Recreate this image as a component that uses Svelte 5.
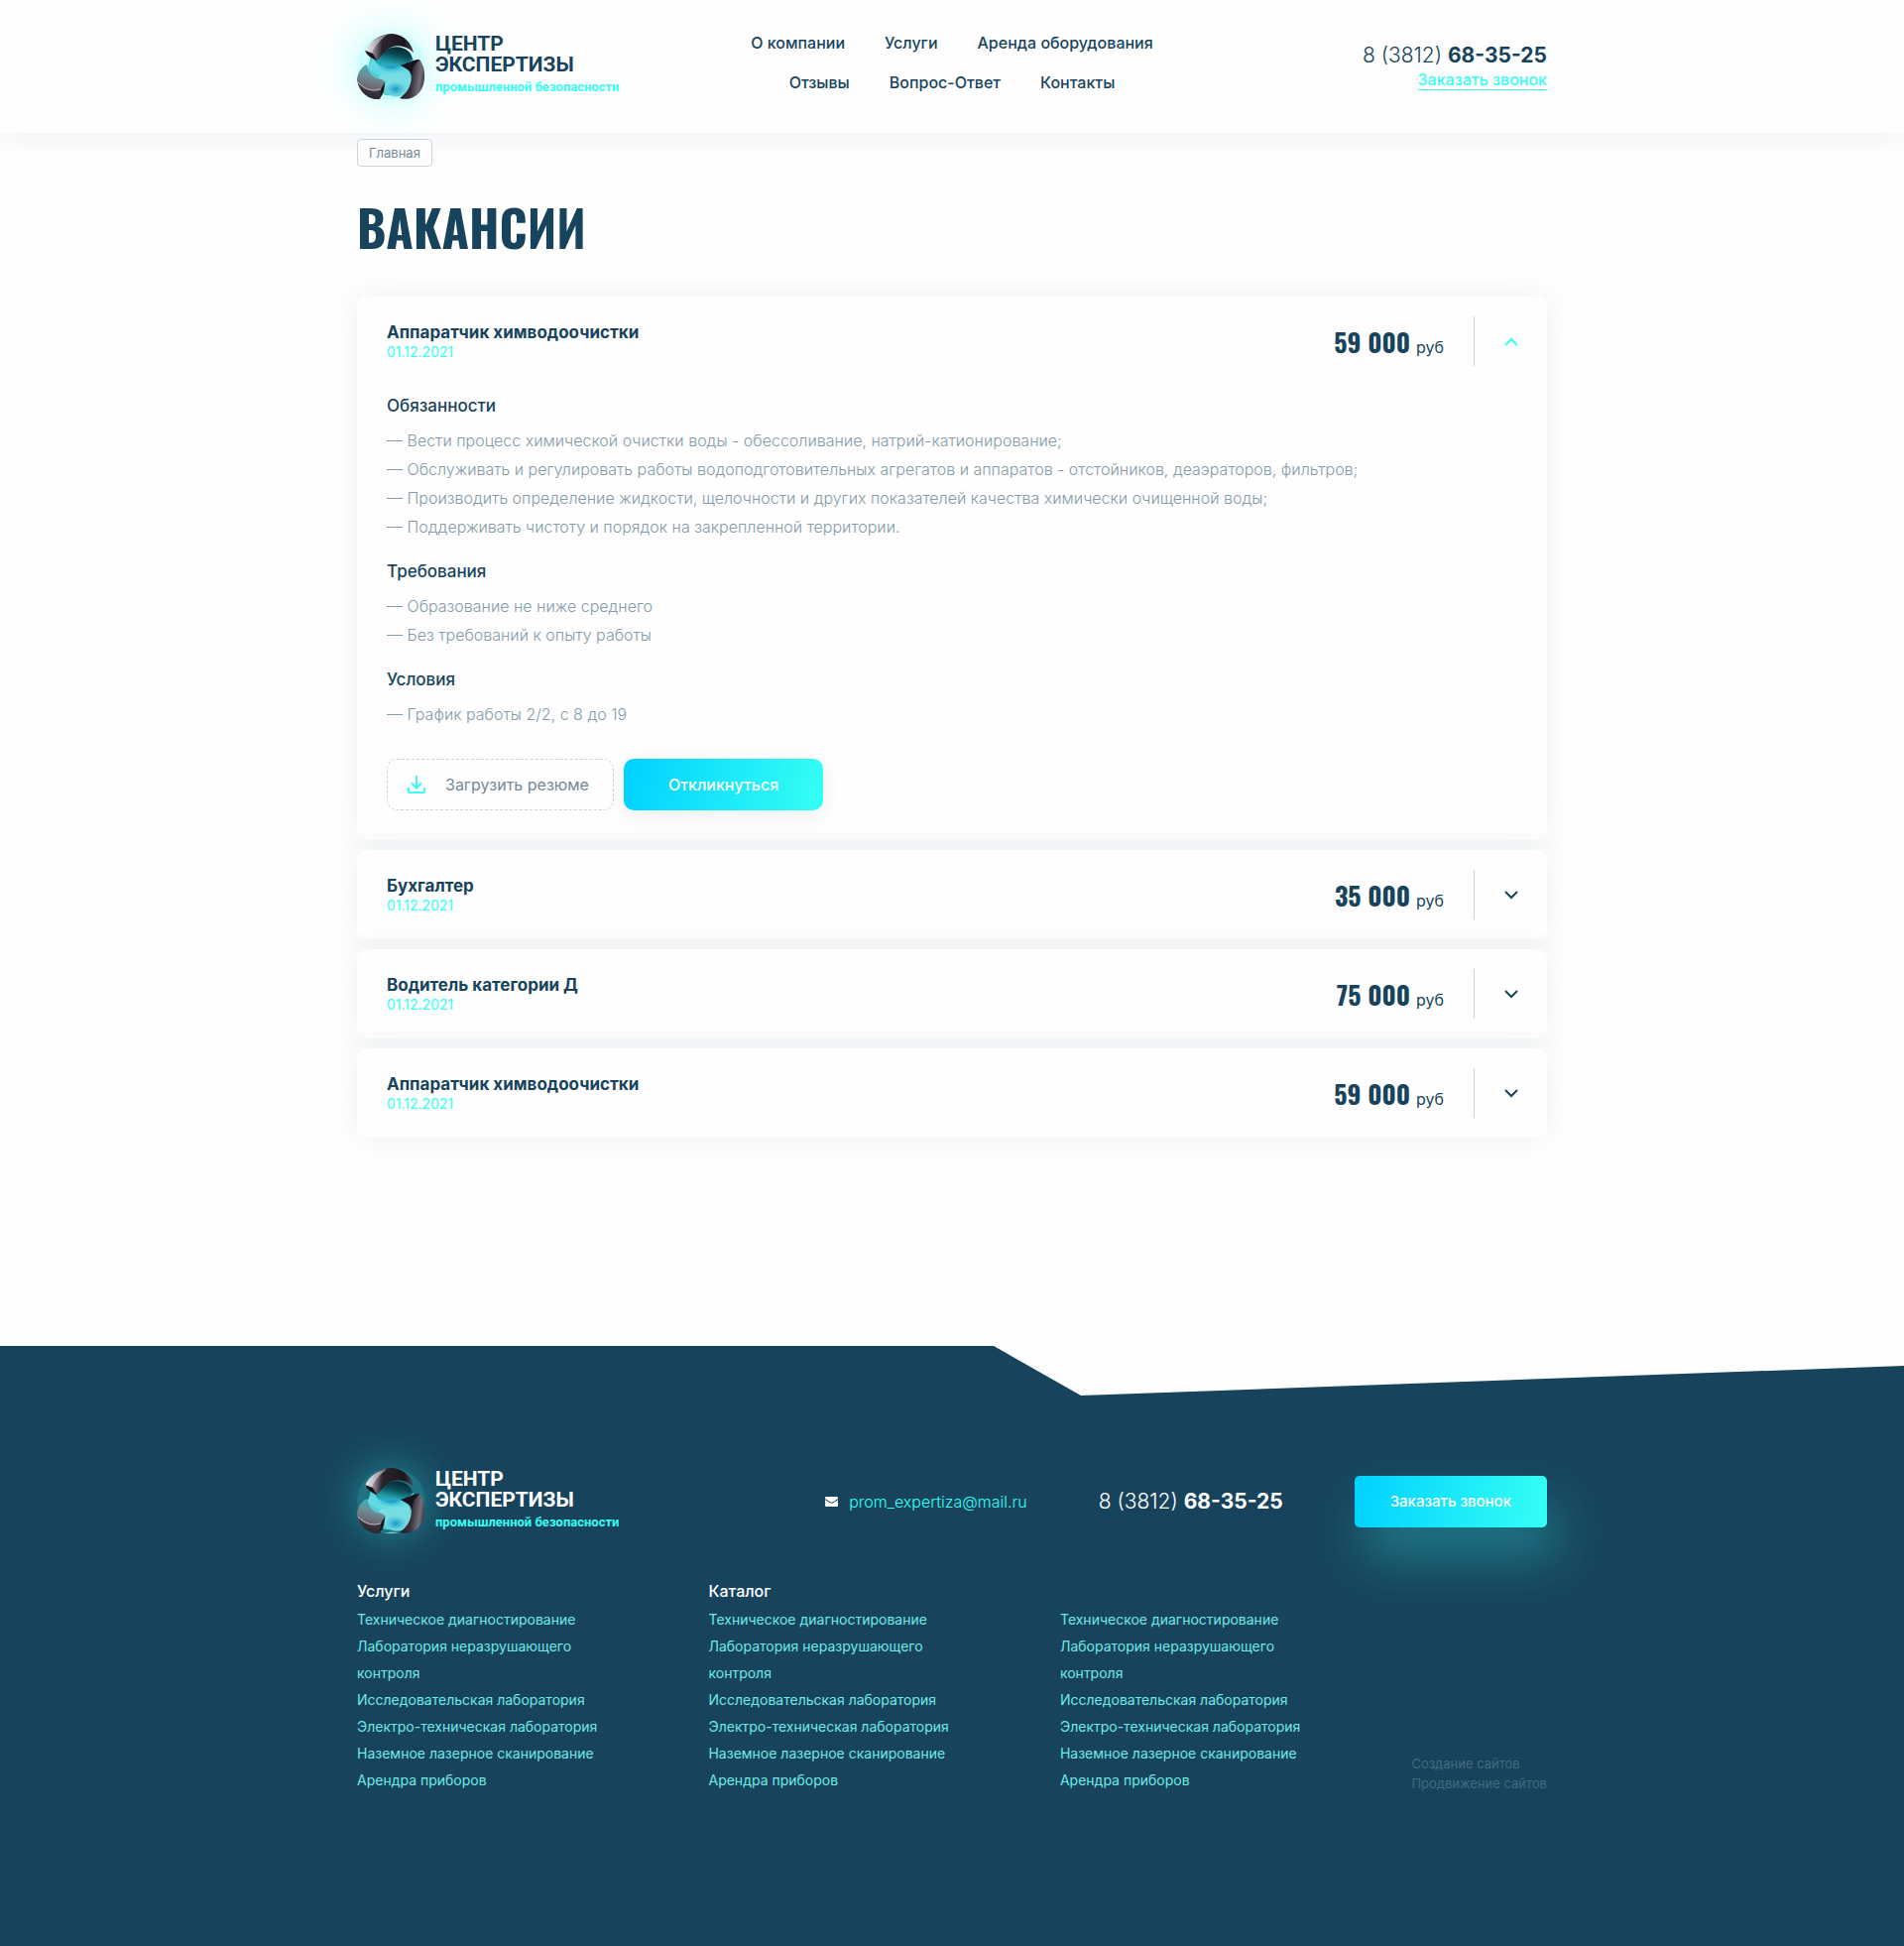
<script>
  const nav = ['О компании', 'Услуги', 'Аренда оборудования', 'Отзывы', 'Вопрос-Ответ', 'Контакты'];

  const details = [
    {
      title: 'Обязанности',
      items: [
        'Вести процесс химической очистки воды - обессоливание, натрий-катионирование;',
        'Обслуживать и регулировать работы водоподготовительных агрегатов и аппаратов - отстойников, деаэраторов, фильтров;',
        'Производить определение жидкости, щелочности и других показателей качества химически очищенной воды;',
        'Поддерживать чистоту и порядок на закрепленной территории.'
      ]
    },
    { title: 'Требования', items: ['Образование не ниже среднего', 'Без требований к опыту работы'] },
    { title: 'Условия', items: ['График работы 2/2, с 8 до 19'] }
  ];

  let vacancies = $state([
    { title: 'Аппаратчик химводоочистки', date: '01.12.2021', pay: '59 000', open: true },
    { title: 'Бухгалтер', date: '01.12.2021', pay: '35 000', open: false },
    { title: 'Водитель категории Д', date: '01.12.2021', pay: '75 000', open: false },
    { title: 'Аппаратчик химводоочистки', date: '01.12.2021', pay: '59 000', open: false }
  ]);

  const links = [
    'Техническое диагностирование',
    'Лаборатория неразрушающего контроля',
    'Исследовательская лаборатория',
    'Электро-техническая лаборатория',
    'Наземное лазерное сканирование',
    'Арендра приборов'
  ];
  const columns = ['Услуги', 'Каталог', ''];
</script>

{#snippet logo(id)}
  <a class="logo" href="#top" aria-label="Центр экспертизы промышленной безопасности">
    <span class="emblem">
      <svg width="69" height="67" viewBox="0 0 69 67" aria-hidden="true">
        <defs>
          <linearGradient id="{id}-top" x1="0" y1="0.35" x2="1" y2="0.4">
            <stop offset="0" stop-color="#f4f6f8" />
            <stop offset="0.16" stop-color="#a19da6" />
            <stop offset="0.36" stop-color="#2b242d" />
            <stop offset="0.8" stop-color="#1b161e" />
            <stop offset="1" stop-color="#4b4650" />
          </linearGradient>
          <linearGradient id="{id}-left" x1="0.6" y1="0" x2="0.4" y2="1">
            <stop offset="0" stop-color="#35b5bb" />
            <stop offset="0.35" stop-color="#6b9199" />
            <stop offset="0.65" stop-color="#6f6973" />
            <stop offset="1" stop-color="#2a242d" />
          </linearGradient>
          <linearGradient id="{id}-right" x1="0" y1="0.4" x2="1" y2="0.6">
            <stop offset="0" stop-color="#17151c" />
            <stop offset="0.5" stop-color="#38323c" />
            <stop offset="0.8" stop-color="#746f7b" />
            <stop offset="1" stop-color="#37313b" />
          </linearGradient>
          <linearGradient id="{id}-hole" x1="0.7" y1="0" x2="0.35" y2="1">
            <stop offset="0" stop-color="#08252e" />
            <stop offset="0.35" stop-color="#0a4d57" />
            <stop offset="0.7" stop-color="#22a0ac" />
            <stop offset="1" stop-color="#2fb9d8" />
          </linearGradient>
          <radialGradient id="{id}-spot">
            <stop offset="0" stop-color="#1797cc" />
            <stop offset="1" stop-color="#3bb6cf" stop-opacity="0" />
          </radialGradient>
        </defs>
        <path d="M14 22 22 18 46 16 57 26 56 40 54 58 46 63 28 62 18 52 10 38Z" fill="#54cdd6" />
        <path d="M17 27C23 17 36 11 45 14 52 16 56 21 56 27 51 32 43 37 34 37 25 37 17 33 17 27Z" fill="url(#{id}-hole)" />
        <path d="M17 26 21 31C28 37 46 36 57 25 57 34 50 41 40 43 26 44 15 40 10 33Z" fill="#62d9e3" />
        <ellipse cx="35" cy="34" rx="15" ry="5" fill="url(#{id}-spot)" />
        <path d="M22 42C30 40 46 40 52 38 57 48 53 58 47 62 38 66 30 62 26 54Z" fill="#78dde2" />
        <ellipse cx="39" cy="56" rx="12" ry="8" fill="url(#{id}-spot)" />
        <path d="M8 18C13 6 25 0 36 0 47 1 55 9 57 19 49 11 38 10 30 16L20 27C15 24 11 22 8 18Z" fill="url(#{id}-top)" />
        <path d="M9 16C14 7 22 3 30 1 24 6 18 12 15 20Z" fill="#edf0f3" opacity="0.5" />
        <path d="M8 17 16 20 20 27C15 25 10 22 8 17Z" fill="#17131a" />
        <path d="M10 31C3 34 0 42 0 47 2 59 12 67 23 66L25 56 29 49 25 46C18 46 11 40 10 31Z" fill="url(#{id}-left)" />
        <path d="M1 50C8 58 18 60 26 55L23 66C12 67 3 59 1 50Z" fill="#2b252e" opacity="0.7" />
        <path d="M1 49C8 57 18 59 26 55" fill="none" stroke="#d7d9dd" stroke-width="1" opacity="0.75" />
        <path d="M28 49 24 56 23 65C27 61 28 54 28 49Z" fill="#19151d" />
        <path d="M44 32C51 30 58 26 63 26 68 32 70 44 66 54 62 63 53 68 43 65 52 59 57 48 54 38Z" fill="url(#{id}-right)" />
        <path d="M44 32C51 30 57 26 63 26L57 33 55 42C53 36 49 33 44 32Z" fill="#17141b" />
        <path d="M28 66Q35 63 42 66Z" fill="#d8f3f4" opacity="0.6" />
      </svg>
    </span>
    <span class="wordmark">
      <span class="word">ЦЕНТР</span>
      <span class="word">ЭКСПЕРТИЗЫ</span>
      <span class="tagline">промышленной безопасности</span>
    </span>
  </a>
{/snippet}

<div class="page" id="top">
  <header class="header">
    <div class="container header-row">
      {@render logo('head')}
      <nav class="nav" aria-label="Основное меню">
        {#each nav as item}
          <a href="#top">{item}</a>
        {/each}
      </nav>
      <div class="contact">
        <a class="phone" href="tel:+73812683525">8 (3812) <b>68-35-25</b></a>
        <button class="call-link" type="button">Заказать звонок</button>
      </div>
    </div>
  </header>

  <main class="container main">
    <a class="crumb" href="#top">Главная</a>
    <h1>ВАКАНСИИ</h1>

    <div class="list">
      {#each vacancies as job, i}
        <article class="card">
          <button
            class="card-head"
            type="button"
            aria-expanded={job.open}
            aria-controls="job-{i}"
            onclick={() => (job.open = !job.open)}
          >
            <span class="job">
              <span class="job-title">{job.title}</span>
              <span class="job-date">{job.date}</span>
            </span>
            <span class="pay"><b>{job.pay}</b><span>руб</span></span>
            <span class="toggle">
              <svg class:open={job.open} width="14" height="9" viewBox="0 0 14 9" aria-hidden="true">
                <path d="M1 1 7 7 13 1" fill="none" stroke="currentColor" stroke-width="2" />
              </svg>
            </span>
          </button>
          {#if job.open}
            <div class="card-body" id="job-{i}">
              {#each details as part}
                <h2>{part.title}</h2>
                <ul>
                  {#each part.items as item}
                    <li>— {item}</li>
                  {/each}
                </ul>
              {/each}
              <div class="actions">
                <label class="upload">
                  <input type="file" />
                  <svg width="18" height="18" viewBox="0 0 18 18" aria-hidden="true">
                    <path d="M9 0V12M4 7.500 9 12.500 14 7.500M1 12V16Q1 17 2 17H16Q17 17 17 16V12" fill="none" stroke="currentColor" stroke-width="2" />
                  </svg>
                  <span>Загрузить резюме</span>
                </label>
                <button class="respond" type="button">Откликнуться</button>
              </div>
            </div>
          {/if}
        </article>
      {/each}
    </div>
  </main>

  <footer class="footer">
    <svg class="edge" viewBox="0 0 1920 50" preserveAspectRatio="none" aria-hidden="true">
      <path d="M1002 0 1090 50 1920 20V0Z" fill="#fefefe" />
    </svg>
    <div class="container">
      <div class="footer-top">
        {@render logo('foot')}
        <a class="mail" href="mailto:prom_expertiza@mail.ru">
          <svg width="13" height="10" viewBox="0 0 13 10" aria-hidden="true">
            <rect width="13" height="10" rx="1" fill="#fff" />
            <path d="M0 2.500 5 5.800Q6.500 6.700 8 5.800L13 2.500" fill="none" stroke="#17445c" stroke-width="1" />
          </svg>
          <span>prom_expertiza@mail.ru</span>
        </a>
        <a class="phone" href="tel:+73812683525">8 (3812) <b>68-35-25</b></a>
        <button class="order" type="button">Заказать звонок</button>
      </div>
      <div class="footer-cols">
        {#each columns as title}
          <section class="col">
            <h3>{title}</h3>
            <ul>
              {#each links as link}
                <li><a href="#top">{link}</a></li>
              {/each}
            </ul>
          </section>
        {/each}
        <div class="credits">
          <a href="#top">Создание сайтов</a>
          <a href="#top">Продвижение сайтов</a>
        </div>
      </div>
    </div>
  </footer>
</div>

<style>
  :global(body) {
    background: #fefefe;
  }
  .page {
    font-family: Inter, 'Liberation Sans', sans-serif;
    font-size: 16px;
    color: #17445c;
  }
  .page * {
    box-sizing: border-box;
  }
  a {
    color: inherit;
    text-decoration: none;
  }
  button {
    font: inherit;
    color: inherit;
    background: none;
    border: 0;
    padding: 0;
    cursor: pointer;
  }
  h1,
  h2,
  h3,
  ul {
    margin: 0;
    padding: 0;
  }
  ul {
    list-style: none;
  }
  .container {
    max-width: 1200px;
    margin: 0 auto;
  }

  .header {
    background: #fefefe;
    box-shadow: 0 0 30px rgba(23, 44, 92, 0.08);
  }
  .header-row {
    display: grid;
    grid-template-columns: 1fr 440px 1fr;
    align-items: center;
    min-height: 134px;
  }
  .logo {
    display: flex;
    align-items: center;
    gap: 10px;
  }
  .emblem {
    display: flex;
    border-radius: 50%;
    background: rgba(53, 255, 244, 0.25);
    box-shadow: 0 0 40px rgba(53, 255, 244, 0.4);
  }
  .wordmark {
    display: flex;
    flex-direction: column;
    font-family: Roboto, sans-serif;
    font-weight: 700;
  }
  .word {
    font-size: 21px;
    line-height: 21px;
  }
  .tagline {
    font-size: 13px;
    line-height: 24px;
    color: #35fff4;
  }
  .nav {
    display: flex;
    flex-wrap: wrap;
    justify-content: center;
    column-gap: 40px;
    padding-bottom: 8px;
    line-height: 40px;
    font-weight: 500;
  }
  .contact {
    display: flex;
    flex-direction: column;
    align-items: flex-end;
    padding-bottom: 2px;
  }
  .phone {
    font-size: 21px;
    font-weight: 300;
    line-height: 28px;
  }
  .phone b {
    font-weight: 700;
  }
  .call-link {
    color: #35fff4;
    font-weight: 500;
    line-height: 20px;
    border-bottom: 1px solid #35fff4;
  }

  .main {
    padding: 6px 0 210px;
  }
  .crumb {
    display: inline-block;
    padding: 0 11px;
    border: 1px solid #cad5dd;
    border-radius: 4px;
    background: #fefefe;
    color: #748a98;
    font-size: 13px;
    line-height: 26px;
  }
  h1 {
    margin: 22px 0 33px;
    font-family: Oswald, 'Roboto Condensed', sans-serif;
    font-size: 50px;
    font-weight: 700;
    line-height: 76px;
  }
  .list {
    display: flex;
    flex-direction: column;
    gap: 10px;
  }
  .card {
    border-radius: 10px;
    background: #fefefe;
    box-shadow: 0 0 30px rgba(23, 54, 92, 0.07);
  }
  .card-head {
    display: flex;
    align-items: center;
    width: 100%;
    height: 90px;
    padding-left: 30px;
    text-align: left;
  }
  .job {
    display: flex;
    flex-direction: column;
    flex: 1;
    padding-top: 2px;
    line-height: 20px;
  }
  .job-title {
    font-size: 17px;
    font-weight: 700;
  }
  .job-date {
    color: #35fff4;
    font-size: 14px;
  }
  .pay {
    display: flex;
    align-items: baseline;
    gap: 6px;
    padding: 2px 30px 0 0;
    line-height: 20px;
  }
  .pay b {
    font-family: Oswald, 'Roboto Condensed', sans-serif;
    font-size: 26px;
    font-weight: 700;
    line-height: 50px;
  }
  .toggle {
    display: flex;
    align-items: center;
    justify-content: center;
    width: 74px;
    height: 50px;
    border-left: 1px solid #cad5da;
  }
  .toggle svg.open {
    color: #35fff4;
    transform: rotate(180deg);
  }
  .card-body {
    padding: 10px 30px 30px;
  }
  h2 {
    margin-bottom: 11px;
    font-size: 17px;
    font-weight: 500;
    line-height: 20px;
  }
  .card-body ul {
    margin-bottom: 20px;
    color: #849ca8;
    font-weight: 300;
    line-height: 29px;
  }
  .actions {
    display: flex;
    gap: 10px;
    padding-top: 10px;
  }
  .upload {
    display: flex;
    align-items: center;
    gap: 20px;
    height: 52px;
    padding: 0 24px 0 20px;
    border: 1px dashed #cad5da;
    border-radius: 10px;
    color: #748a98;
    cursor: pointer;
  }
  .upload input {
    position: absolute;
    width: 1px;
    height: 1px;
    opacity: 0;
  }
  .upload svg {
    color: #35fff4;
  }
  .respond,
  .order {
    height: 52px;
    background: linear-gradient(100deg, #00d1ff, #35fff4);
    color: #fefefe;
    font-weight: 500;
  }
  .respond {
    padding: 0 45px;
    border-radius: 10px;
    box-shadow: 0 4px 20px rgba(23, 44, 92, 0.08);
  }

  .footer {
    min-height: 605px;
    background: #17445c;
    color: #fff;
  }
  .edge {
    display: block;
    width: 100%;
    height: 50px;
  }
  .footer-top {
    display: flex;
    align-items: center;
    gap: 72px;
    padding-top: 73px;
  }
  .mail {
    display: flex;
    align-items: center;
    gap: 11px;
    margin-left: auto;
    color: #35fff4;
    font-weight: 300;
  }
  .order {
    padding: 0 36px;
    border-radius: 5px;
    font-size: 15px;
    box-shadow: 10px 30px 50px rgba(53, 255, 244, 0.3);
  }
  .footer-cols {
    display: flex;
    justify-content: space-between;
    margin-top: 45px;
  }
  .col {
    width: 255px;
    font-size: 14px;
    line-height: 27px;
    color: #6fe9e4;
  }
  h3 {
    height: 27px;
    color: #fff;
    font-size: 16px;
    font-weight: 500;
    line-height: 25px;
  }
  .credits {
    display: flex;
    flex-direction: column;
    align-self: flex-end;
    color: #456a7e;
    font-size: 13px;
    line-height: 20px;
  }
</style>
